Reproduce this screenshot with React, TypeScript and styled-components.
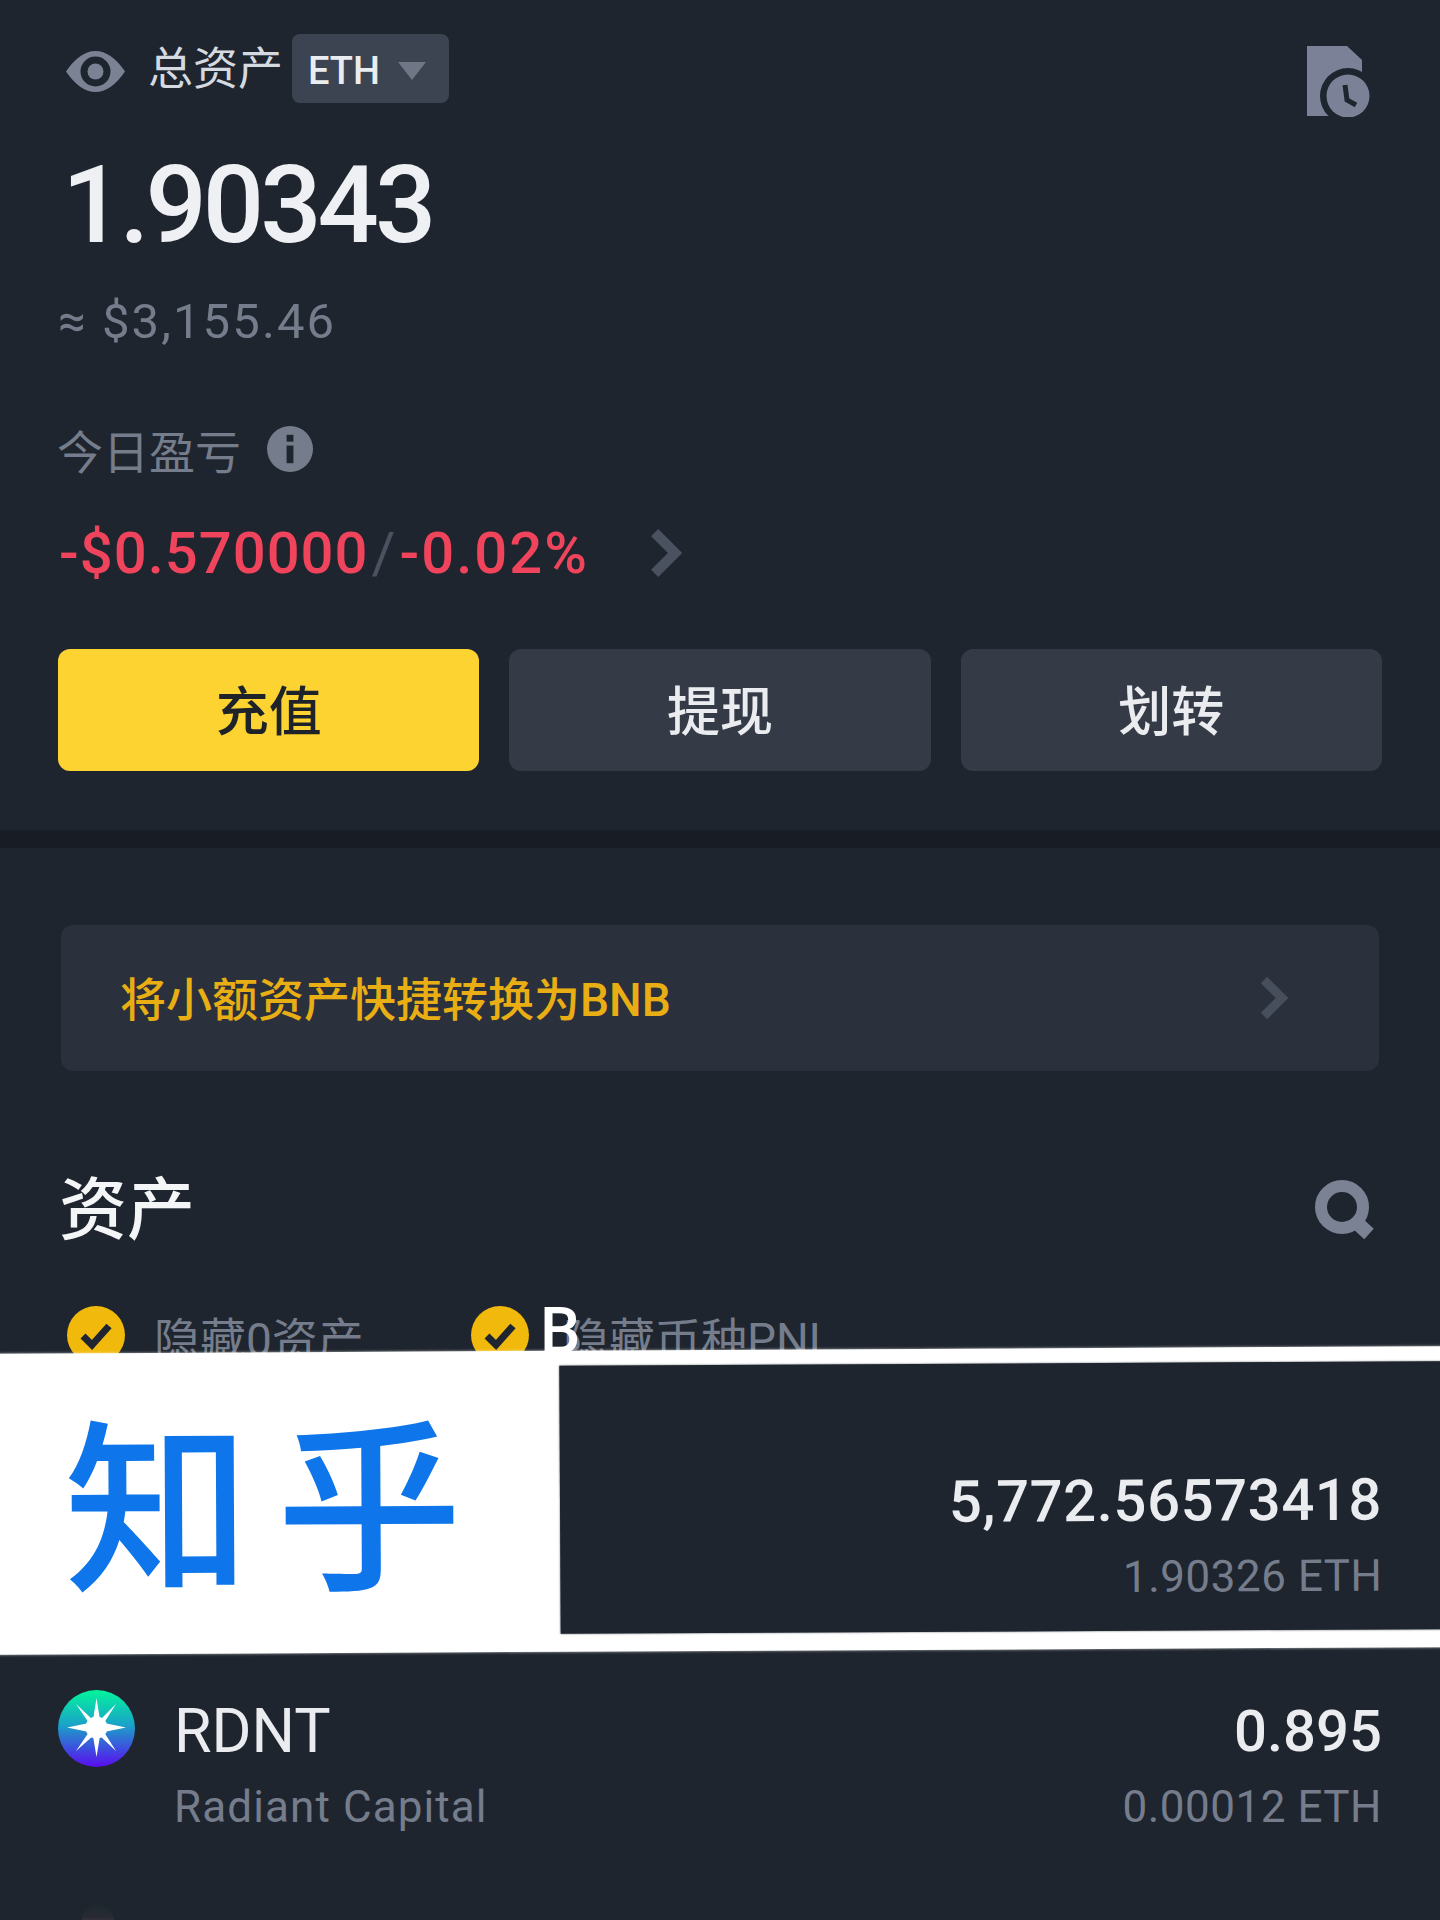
import React from "react";
import styled, { createGlobalStyle } from "styled-components";

const BG = "#1f252e";
const MUTED = "#757d8c";

const Global = createGlobalStyle`
  html, body { margin: 0; padding: 0; background: ${BG}; }
  #root { width: 1440px; height: 1920px; overflow: hidden; position: relative; }
`;

const FONT = `Roboto, "Noto Sans CJK SC", sans-serif`;

const Page = styled.div`
  width: 1440px;
  height: 1920px;
  background: ${BG};
  font-family: ${FONT};
  position: relative;
  overflow: hidden;
`;

const Summary = styled.section`
  height: 830px;
  padding: 34px 58px 0;
  box-sizing: border-box;
  display: flex;
  flex-direction: column;
`;

const TopRow = styled.div`
  height: 69px;
  display: flex;
  align-items: center;
  padding-left: 8px;
`;

const EyeIcon = styled.svg`
  width: 59px;
  height: 41px;
  margin-top: 6px;
`;

const TopLabel = styled.span`
  margin-left: 23px;
  margin-top: 2px;
  font-size: 45px;
  line-height: 69px;
  color: #d5d9e0;
`;

const UnitChip = styled.div`
  margin-left: 9px;
  width: 157px;
  height: 69px;
  padding: 4px 0 0 16px;
  box-sizing: border-box;
  border-radius: 8px;
  background: #3c4452;
  display: flex;
  align-items: center;
  gap: 18px;
  font-size: 38px;
  font-weight: 500;
  color: #eaecef;
`;

const Caret = styled.span`
  width: 0;
  height: 0;
  border-left: 14px solid transparent;
  border-right: 14px solid transparent;
  border-top: 18px solid #6f7787;
`;

const RecordIcon = styled.svg`
  margin-left: auto;
  margin-right: 5px;
  margin-top: 24px;
  width: 70px;
  height: 72px;
`;

const Amount = styled.div`
  margin-top: 48px;
  margin-left: 4px;
  font-size: 108px;
  line-height: 108px;
  letter-spacing: -4px;
  font-weight: 500;
  color: #eef0f3;
`;

const Approx = styled.div`
  margin-top: 33px;
  font-size: 49px;
  line-height: 60px;
  letter-spacing: 2.1px;
  color: ${MUTED};
`;

const PnlLabelRow = styled.div`
  margin-top: 67px;
  height: 60px;
  margin-left: -1px;
  display: flex;
  align-items: center;
  gap: 24px;
  font-size: 46px;
  color: ${MUTED};
`;

const InfoIcon = styled.svg`
  width: 46px;
  height: 46px;
  margin-left: 2px;
`;

const PnlRow = styled.div`
  margin-top: 39px;
  display: flex;
  align-items: center;
  margin-left: 1px;
  height: 70px;
  font-size: 58px;
  letter-spacing: 1px;
  font-weight: 500;
  color: #f0445c;
`;

const Slash = styled.span`
  color: #4a5260;
  font-weight: 400;
  margin: 0 3px;
`;

const Percent = styled.span`
  letter-spacing: 2px;
`;

const PnlChevron = styled.svg`
  margin-left: 60px;
  width: 34px;
  height: 52px;
`;

const Actions = styled.div`
  margin-top: 61px;
  display: grid;
  grid-template-columns: repeat(3, 1fr);
  gap: 30px;
`;

const ActionButton = styled.div<{ $primary?: boolean }>`
  height: 122px;
  padding-bottom: 4px;
  box-sizing: border-box;
  border-radius: 12px;
  background: ${(p) => (p.$primary ? "#fdd331" : "#343b47")};
  color: ${(p) => (p.$primary ? "#1e2329" : "#eaecef")};
  display: flex;
  align-items: center;
  justify-content: center;
  font-size: 53px;
  font-weight: 500;
`;

const Divider = styled.div`
  height: 18px;
  background: #181c25;
`;

const Assets = styled.section`
  padding: 77px 58px 0;
  display: flex;
  flex-direction: column;
`;

const Banner = styled.div`
  margin: 0 3px;
  height: 146px;
  border-radius: 12px;
  background: #2a313d;
  padding: 0 90px 0 59px;
  display: flex;
  align-items: center;
  justify-content: space-between;
  font-size: 46px;
  font-weight: 500;
  color: #e8ae14;
`;

const BannerText = styled.span`
  margin-bottom: 4px;
`;

const BannerChevron = styled.svg`
  width: 30px;
  height: 46px;
`;

const TitleRow = styled.div`
  margin-top: 88px;
  margin-left: 1px;
  margin-right: 4px;
  height: 90px;
  display: flex;
  align-items: center;
  justify-content: space-between;
`;

const Title = styled.h2`
  margin: 0;
  font-size: 68px;
  font-weight: 500;
  color: #f4f5f7;
`;

const SearchIcon = styled.svg`
  width: 66px;
  height: 62px;
  margin-top: 10px;
`;

const Filters = styled.div`
  margin-top: 57px;
  margin-left: 9px;
  height: 58px;
  display: flex;
  align-items: center;
`;

const Filter = styled.div<{ $width: number }>`
  width: ${(p) => p.$width}px;
  flex: none;
  display: flex;
  align-items: center;
  gap: 31px;
  font-size: 46px;
  line-height: 58px;
  white-space: nowrap;
  color: ${MUTED};
`;

const CheckIcon = styled.svg`
  width: 58px;
  height: 58px;
  flex: none;
`;

const FilterLabel = styled.span<{ $indent: number }>`
  position: relative;
  margin-top: 10px;
  margin-left: ${(p) => p.$indent}px;
`;

const StrayLetter = styled.span`
  position: absolute;
  left: -23px;
  top: -18px;
  color: #fff;
  font-size: 64px;
  font-weight: 500;
  line-height: 77px;
`;

const CoinRow = styled.div`
  margin-top: 326px;
  display: flex;
  align-items: flex-start;
`;

const CoinIcon = styled.svg`
  width: 77px;
  height: 77px;
  flex: none;
`;

const CoinNames = styled.div`
  margin-left: 39px;
  display: flex;
  flex-direction: column;
`;

const Symbol = styled.div`
  margin-top: 6px;
  font-size: 61px;
  line-height: 70px;
  color: #eaecef;
`;

const FullName = styled.div`
  margin-top: 11px;
  font-size: 44px;
  line-height: 60px;
  letter-spacing: 1.1px;
  color: ${MUTED};
`;

const CoinValues = styled.div`
  margin-left: auto;
  display: flex;
  flex-direction: column;
  align-items: flex-end;
`;

const Balance = styled.div`
  margin-top: 6px;
  font-size: 58px;
  line-height: 70px;
  font-weight: 500;
  color: #eaecef;
`;

const Worth = styled.div`
  margin-top: 11px;
  font-size: 44px;
  line-height: 60px;
  letter-spacing: 0.5px;
  color: ${MUTED};
`;

const NextCoinPeek = styled.div`
  margin: 68px 0 0 24px;
  width: 32px;
  height: 20px;
  border-radius: 16px 16px 0 0;
  background: linear-gradient(#1d2a2e, #282932 60%, #4a3d48);
`;

/* White sticker laid over the screenshot */
const Sticker = styled.div`
  position: absolute;
  left: -20px;
  top: 1350px;
  width: 1480px;
  height: 301px;
  background: #fff;
  transform: rotate(-0.3deg);
  box-shadow: 0 0 3px rgba(255, 255, 255, 0.7);
`;

const StickerWord = styled.div`
  position: absolute;
  left: 84px;
  top: 28px;
  font-family: "Noto Sans CJK SC", sans-serif;
  font-size: 186px;
  line-height: 230px;
  font-weight: 500;
  letter-spacing: 26px;
  color: #0e76ea;
`;

const StickerPanel = styled.div`
  position: absolute;
  left: 580px;
  top: 15px;
  right: 0;
  height: 268px;
  background: ${BG};
  padding: 105px 78px 0 0;
  box-sizing: border-box;
  display: flex;
  flex-direction: column;
  align-items: flex-end;
  box-shadow: 0 0 2px rgba(30, 37, 48, 0.8);
`;

const PanelBalance = styled.div`
  font-size: 58px;
  line-height: 66px;
  font-weight: 500;
  letter-spacing: 0.6px;
  color: #eaecef;
`;

const PanelWorth = styled.div`
  margin-top: 15px;
  font-size: 44px;
  line-height: 56px;
  letter-spacing: 0.5px;
  color: ${MUTED};
`;

const Chevron = ({ as: C, color }: { as: typeof PnlChevron; color: string }) => (
  <C viewBox="0 0 30 46">
    <path d="M5 5 L23 23 L5 41" fill="none" stroke={color} strokeWidth="9" />
  </C>
);

const Check = () => (
  <CheckIcon viewBox="0 0 58 58">
    <circle cx="29" cy="29" r="29" fill="#f0b90b" />
    <path d="M16 30 L25 39 L42 20" fill="none" stroke="#1e2530" strokeWidth="7" />
  </CheckIcon>
);

export default function App() {
  return (
    <Page>
      <Global />
      <Summary>
        <TopRow>
          <EyeIcon viewBox="0 0 59 41">
            <path d="M0 20.5 Q14 0 29.5 0 Q45 0 59 20.5 Q45 41 29.5 41 Q14 41 0 20.5Z" fill="#7a8294" />
            <circle cx="29.5" cy="20.5" r="15" fill={BG} />
            <circle cx="29.5" cy="20.5" r="8" fill="#7a8294" />
          </EyeIcon>
          <TopLabel>总资产</TopLabel>
          <UnitChip>
            ETH
            <Caret />
          </UnitChip>
          <RecordIcon viewBox="0 0 70 72">
            <path d="M0 1 H40 L55 15 V71 H0Z" fill="#7b8298" />
            <circle cx="41" cy="51" r="28" fill={BG} />
            <circle cx="41" cy="51" r="21.5" fill="#7b8298" />
            <path d="M38 40 L40 55 L49 60" fill="none" stroke={BG} strokeWidth="5" />
          </RecordIcon>
        </TopRow>
        <Amount>1.90343</Amount>
        <Approx>≈ $3,155.46</Approx>
        <PnlLabelRow>
          今日盈亏
          <InfoIcon viewBox="0 0 47 47">
            <circle cx="23.5" cy="23.5" r="23.5" fill={MUTED} />
            <rect x="20" y="9" width="7" height="7" fill={BG} />
            <rect x="20" y="20" width="7" height="18" fill={BG} />
          </InfoIcon>
        </PnlLabelRow>
        <PnlRow>
          -$0.570000
          <Slash>/</Slash>
          <Percent>-0.02%</Percent>
          <Chevron as={PnlChevron} color="#4a5260" />
        </PnlRow>
        <Actions>
          <ActionButton $primary>充值</ActionButton>
          <ActionButton>提现</ActionButton>
          <ActionButton>划转</ActionButton>
        </Actions>
      </Summary>
      <Divider />
      <Assets>
        <Banner>
          <BannerText>将小额资产快捷转换为BNB</BannerText>
          <Chevron as={BannerChevron} color="#474f5d" />
        </Banner>
        <TitleRow>
          <Title>资产</Title>
          <SearchIcon viewBox="0 0 66 62">
            <circle cx="30" cy="29" r="21" fill="none" stroke="#7b8294" strokeWidth="12" />
            <path d="M44 44 L57 56" stroke="#7b8294" strokeWidth="14" />
          </SearchIcon>
        </TitleRow>
        <Filters>
          <Filter $width={404}>
            <Check />
            <FilterLabel $indent={-2}>隐藏0资产</FilterLabel>
          </Filter>
          <Filter $width={400}>
            <Check />
            <FilterLabel $indent={3}>
              <StrayLetter>B</StrayLetter>
              隐藏币种PNL
            </FilterLabel>
          </Filter>
        </Filters>
        <CoinRow>
          <CoinIcon viewBox="0 0 77 77">
            <defs>
              <linearGradient id="rdnt" x1="0" y1="0" x2="0" y2="1">
                <stop offset="0" stopColor="#03f59c" />
                <stop offset="0.45" stopColor="#1aa3c8" />
                <stop offset="1" stopColor="#5a0cf0" />
              </linearGradient>
            </defs>
            <circle cx="38.5" cy="38.5" r="38.5" fill="url(#rdnt)" />
            <path
              d="M38.5 8 L42 30 L58 14 L46 33 L68 37.5 L46 42 L58 61 L42 46 L38.5 67 L35 46 L18 61 L31 42 L9 37.5 L31 33 L18 14 L35 30Z"
              fill="#fff"
            />
            <circle cx="38.5" cy="37.5" r="11" fill="#fff" />
          </CoinIcon>
          <CoinNames>
            <Symbol>RDNT</Symbol>
            <FullName>Radiant Capital</FullName>
          </CoinNames>
          <CoinValues>
            <Balance>0.895</Balance>
            <Worth>0.00012 ETH</Worth>
          </CoinValues>
        </CoinRow>
        <NextCoinPeek />
      </Assets>
      <Sticker>
        <StickerWord>知乎</StickerWord>
        <StickerPanel>
          <PanelBalance>5,772.56573418</PanelBalance>
          <PanelWorth>1.90326 ETH</PanelWorth>
        </StickerPanel>
      </Sticker>
    </Page>
  );
}
